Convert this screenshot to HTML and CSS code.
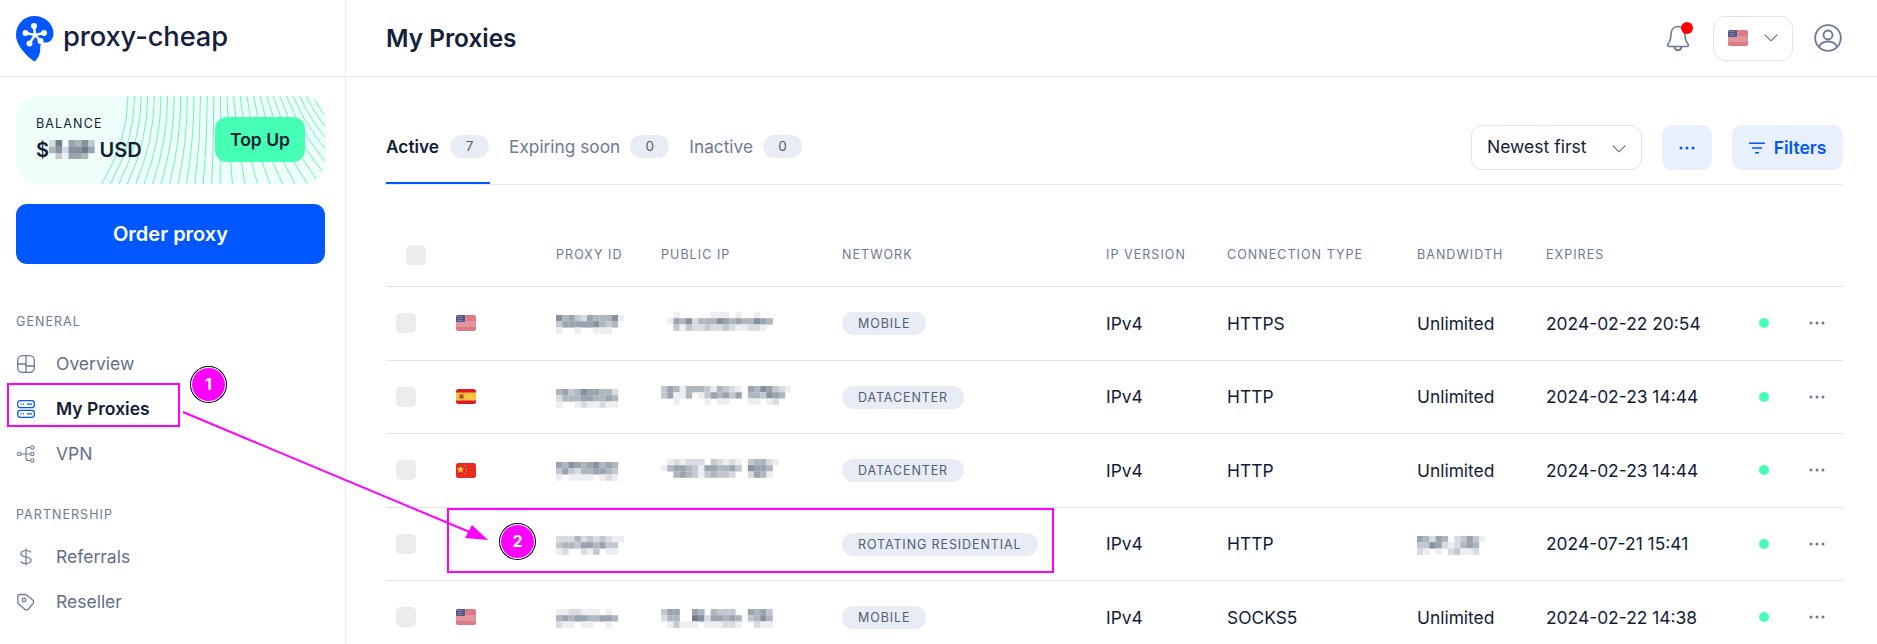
FILE: index.html
```html
<!DOCTYPE html>
<html lang="en">
<head>
<meta charset="utf-8">
<title>My Proxies</title>
<link rel="stylesheet" href="styles.css">
</head>
<body>
<svg class="defs" width="0" height="0" aria-hidden="true">
  <defs>
    <symbol id="flag-us" viewBox="0 0 20 16">
      <rect width="20" height="16" rx="1.5" fill="#e2959f"/>
      <path d="M0 1h20M0 13h20M0 15h20M10 3h10M10 5h10" stroke="#d8606f" stroke-width="1"/>
      <rect width="9" height="7" rx="1" fill="#4f5485"/>
      <path d="M1.500 1.500h6M1.500 3.500h6M1.500 5.500h6" stroke="#a9acc8" stroke-width="1" stroke-dasharray="1 1"/>
    </symbol>
    <symbol id="flag-es" viewBox="0 0 20 15">
      <rect width="20" height="15" rx="1.500" fill="#dd1a2a"/>
      <rect y="3.500" width="20" height="8" fill="#f7c23d"/>
      <rect x="3.500" y="5.500" width="4" height="4" fill="#b5442b"/>
    </symbol>
    <symbol id="flag-cn" viewBox="0 0 20 15">
      <rect width="20" height="15" rx="1.500" fill="#ea2a1f"/>
      <path d="M4.500 2.500l1 2.800 2.800.1-2.200 1.700.8 2.700-2.400-1.600-2.400 1.600.8-2.700L.7 5.400l2.800-.1z" fill="#f9d84a"/>
      <path d="M9 2.500v1M10.500 5v1M10.500 7.500v1M9 10v1" stroke="#f9d84a" stroke-width="1"/>
    </symbol>
    <symbol id="chev" viewBox="0 0 14 8">
      <path d="M.7.7 7 6.800 13.300.7" fill="none" stroke="#5d6470" stroke-width="1.100"/>
    </symbol>
    <symbol id="dots" viewBox="0 0 16 4">
      <circle cx="2" cy="2" r="1.500"/><circle cx="8" cy="2" r="1.500"/><circle cx="14" cy="2" r="1.500"/>
    </symbol>
  </defs>
</svg>

<div class="app">
  <aside class="sidebar">
    <div class="brand">
      <svg class="logo" viewBox="0 0 38 46" aria-hidden="true">
        <path fill="#0057ff" d="M18.500 0C29 0 37.500 8 37.500 17.500 37.500 23.500 33.500 27 28.500 26.500 25.500 26.200 24.300 28 24.300 31 24.300 36 23.500 41.500 18.500 45.500 15 43.300 0 31.500 0 19 0 8 8 0 18.500 0Z"/>
        <g stroke="#fff" stroke-width="2.400" fill="#fff">
          <path d="M19 19 18 10M19 19 28 17M19 19 9.500 17M19 19 13.500 27.500M19 19 24.500 25" fill="none"/>
          <circle cx="18" cy="10" r="1.800"/><circle cx="28" cy="17" r="1.800"/><circle cx="9.500" cy="17" r="1.800"/><circle cx="13.500" cy="27.500" r="1.800"/><circle cx="24.500" cy="25" r="1.800"/>
        </g>
      </svg>
      <span class="brand-name">proxy-cheap</span>
    </div>
    <div class="side-body">
      <div class="balance">
        <svg class="balance-lines" id="balance-lines" width="309" height="88" aria-hidden="true"></svg>
        <div class="balance-info">
          <div class="balance-label">BALANCE</div>
          <div class="balance-amount">$<span class="mosaic" data-cell="6.500" data-rows="2705463|4626675|0315540"></span> USD</div>
        </div>
        <button class="topup">Top Up</button>
      </div>
      <button class="order">Order proxy</button>

      <div class="nav-title first">GENERAL</div>
      <a class="nav-item">
        <svg class="nav-icon" viewBox="0 0 18 18" fill="none" stroke="#6c7a93" stroke-width="1.300"><rect x=".7" y=".7" width="16.600" height="16.600" rx="4.500"/><path d="M9 .7V17.300M.7 9h8.300M9 11h8.300"/></svg>
        <span>Overview</span>
      </a>
      <a class="nav-item active">
        <svg class="nav-icon" viewBox="0 0 18 18" fill="none" stroke="#0057ff" stroke-width="1.300"><rect x=".7" y=".7" width="16.600" height="7" rx="2.500"/><rect x=".7" y="10.300" width="16.600" height="7" rx="2.500"/><path d="M3.500 4.200h1.200M6 4.200h1M10 4.200h5M3.500 13.800h1.200M6 13.800h1M10 13.800h5"/></svg>
        <span>My Proxies</span>
      </a>
      <a class="nav-item">
        <svg class="nav-icon" viewBox="0 0 18 18" fill="none" stroke="#6c7a93" stroke-width="1.100"><circle cx="2.200" cy="9" r="1.700"/><circle cx="15.300" cy="2.500" r="1.700"/><circle cx="15.300" cy="9" r="1.700"/><circle cx="15.300" cy="15.500" r="1.700"/><path d="M4 9h9.500M13.500 2.500H11a2 2 0 0 0-2 2v9a2 2 0 0 0 2 2h2.500"/></svg>
        <span>VPN</span>
      </a>

      <div class="nav-title">PARTNERSHIP</div>
      <a class="nav-item">
        <svg class="nav-icon" viewBox="0 0 18 18" fill="none" stroke="#6c7a93" stroke-width="1.200"><path d="M9 .5v17M14 4.500C13.500 3 11.500 2.500 9 2.500c-3 0-5 1.300-5 3.200C4 8 6.300 8.500 9 9c2.800.5 5 1.200 5 3.300 0 2-2 3.200-5 3.200-2.700 0-4.500-.7-5-2.300"/></svg>
        <span>Referrals</span>
      </a>
      <a class="nav-item">
        <svg class="nav-icon" viewBox="0 0 18 18" fill="none" stroke="#6c7a93" stroke-width="1.300"><path d="M2.500 1.500h6.200l6.800 5.300c1.300 1 1.500 2.600.5 3.800l-4.600 5.400c-1 1.100-2.600 1.200-3.700.2L1.500 11C1 10.500.8 10 .8 9.300V3.200c0-1 .7-1.700 1.700-1.700Z"/><circle cx="7" cy="7" r="1.800"/></svg>
        <span>Reseller</span>
      </a>
    </div>
  </aside>

  <div class="main">
    <header class="topbar">
      <h1 class="page-title">My Proxies</h1>
      <div class="top-actions">
        <div class="bell">
          <svg class="bell-icon" viewBox="0 0 24 28" fill="none" stroke="#6c7a93" stroke-width="1.600"><path d="M12 2.500C7 2.500 5 6.500 5 10.500c0 5-1 7-3 9.500-.8 1-.3 2.500 1 2.500h18c1.300 0 1.800-1.500 1-2.500-2-2.500-3-4.500-3-9.500 0-4-2-8-7-8Z"/><path d="M8.500 23c.5 2 1.800 3.300 3.500 3.300s3-1.300 3.500-3.300" stroke-width="2"/></svg>
          <span class="bell-dot"></span>
        </div>
        <button class="lang">
          <svg class="flag"><use href="#flag-us"/></svg>
          <svg class="chev"><use href="#chev"/></svg>
        </button>
        <svg class="user-icon" viewBox="0 0 28 28" fill="none" stroke="#6c7a93" stroke-width="1.800"><circle cx="14" cy="14" r="12.800"/><circle cx="14" cy="11" r="4.500"/><path d="M5 23c1.500-4 5-5.500 9-5.500s7.500 1.500 9 5.500"/></svg>
      </div>
    </header>

    <div class="content">
      <div class="toolbar">
        <div class="tabs">
          <div class="tab active"><span>Active</span><span class="count">7</span></div>
          <div class="tab"><span>Expiring soon</span><span class="count">0</span></div>
          <div class="tab"><span>Inactive</span><span class="count">0</span></div>
        </div>
        <div class="tools">
          <button class="select"><span>Newest first</span><svg class="chev"><use href="#chev"/></svg></button>
          <button class="soft-btn more"><svg class="dots-icon"><use href="#dots"/></svg></button>
          <button class="soft-btn filters">
            <svg class="filter-icon" viewBox="0 0 16 12" fill="none" stroke="#0057ff" stroke-width="1.400"><path d="M0 1.200h16M3 6h10M6 10.800h4"/></svg>
            <span>Filters</span>
          </button>
        </div>
      </div>

      <div class="table">
        <div class="row head">
          <div class="check-cell"><span class="check head-check"></span></div>
          <div></div>
          <div>PROXY ID</div>
          <div>PUBLIC IP</div>
          <div>NETWORK</div>
          <div>IP VERSION</div>
          <div>CONNECTION TYPE</div>
          <div>BANDWIDTH</div>
          <div>EXPIRES</div>
          <div></div>
          <div></div>
        </div>

        <div class="row">
          <div class="check-cell"><span class="check"></span></div>
          <div><svg class="flag"><use href="#flag-us"/></svg></div>
          <div><span class="mosaic" data-rows="64532544461|35555564340|10010011100"></span></div>
          <div><span class="mosaic up" data-rows="001000001110100100|015462444654544654|003132232232112210"></span></div>
          <div><span class="pill">MOBILE</span></div>
          <div>IPv4</div>
          <div>HTTPS</div>
          <div>Unlimited</div>
          <div>2024-02-22 20:54</div>
          <div><span class="status"></span></div>
          <div><svg class="row-dots"><use href="#dots"/></svg></div>
        </div>

        <div class="row">
          <div class="check-cell"><span class="check"></span></div>
          <div><svg class="flag flag-sm"><use href="#flag-es"/></svg></div>
          <div><span class="mosaic" data-rows="45346554420|24445544540|10012112110"></span></div>
          <div><span class="mosaic up" data-rows="354144431432105465321|351140135453504436540|001000010110001101200"></span></div>
          <div><span class="pill">DATACENTER</span></div>
          <div>IPv4</div>
          <div>HTTP</div>
          <div>Unlimited</div>
          <div>2024-02-23 14:44</div>
          <div><span class="status"></span></div>
          <div><svg class="row-dots"><use href="#dots"/></svg></div>
        </div>

        <div class="row">
          <div class="check-cell"><span class="check"></span></div>
          <div><svg class="flag flag-sm"><use href="#flag-cn"/></svg></div>
          <div><span class="mosaic" data-rows="54654564540|35324455430|10111101210"></span></div>
          <div><span class="mosaic up" data-rows="0121222032121034421|1455431554453065540|0045431343320025410"></span></div>
          <div><span class="pill">DATACENTER</span></div>
          <div>IPv4</div>
          <div>HTTP</div>
          <div>Unlimited</div>
          <div>2024-02-23 14:44</div>
          <div><span class="status"></span></div>
          <div><svg class="row-dots"><use href="#dots"/></svg></div>
        </div>

        <div class="row">
          <div class="check-cell"><span class="check"></span></div>
          <div></div>
          <div><span class="mosaic" data-rows="22242323211|34435545330|12002130110"></span></div>
          <div></div>
          <div><span class="pill">ROTATING RESIDENTIAL</span></div>
          <div>IPv4</div>
          <div>HTTP</div>
          <div><span class="mosaic" data-rows="54254023531|33652124540|21010231120"></span></div>
          <div>2024-07-21 15:41</div>
          <div><span class="status"></span></div>
          <div><svg class="row-dots"><use href="#dots"/></svg></div>
        </div>

        <div class="row">
          <div class="check-cell"><span class="check"></span></div>
          <div><svg class="flag"><use href="#flag-us"/></svg></div>
          <div><span class="mosaic" data-rows="11221110100|45455445540|21101100100"></span></div>
          <div><span class="mosaic" data-rows="3550054043330054530|2440076255454034640|0131110111221002110"></span></div>
          <div><span class="pill">MOBILE</span></div>
          <div>IPv4</div>
          <div>SOCKS5</div>
          <div>Unlimited</div>
          <div>2024-02-22 14:38</div>
          <div><span class="status"></span></div>
          <div><svg class="row-dots"><use href="#dots"/></svg></div>
        </div>
      </div>
    </div>
  </div>
</div>

<div class="mark-box mark-nav"></div>
<div class="mark-box mark-row"></div>
<span class="step step-one">1</span>
<span class="step step-two">2</span>
<svg class="mark-arrow" width="1877" height="644" aria-hidden="true">
  <path d="M183 412 472 533" stroke="#ff00ff" stroke-width="2" fill="none"/>
  <path d="M488 540 465 538 472 525Z" fill="#ff00ff"/>
</svg>
<script src="mosaic.js"></script>
</body>
</html>
```
FILE: styles.css
```css
* { box-sizing: border-box; }
html, body { margin: 0; height: 644px; overflow: hidden; }
body {
  position: relative;
  background: #fff;
  color: #111c36;
  font-family: Inter, "Liberation Sans", sans-serif;
  font-size: 17.400px;
}
button { font: inherit; border: 0; cursor: pointer; }
.defs { position: absolute; }

.app { display: flex; height: 644px; }

/* sidebar */
.sidebar { width: 346px; flex: none; border-right: 1px solid #e9ebef; }
.brand {
  height: 77px;
  display: flex;
  align-items: center;
  gap: 9px;
  padding: 0 0 0 16px;
  border-bottom: 1px solid #e9ebef;
}
.logo { width: 38px; height: 46px; margin-top: 1px; }
.brand-name {
  font-family: Inter, sans-serif;
  font-size: 27.300px;
  font-weight: 500;
  letter-spacing: -.1px;
  color: #14203c;
  margin-top: -3px;
}
.side-body { padding: 19px 20px 0 16px; }

.balance {
  position: relative;
  height: 88px;
  border-radius: 22px;
  background: #effff9;
  overflow: hidden;
  display: flex;
  align-items: center;
  justify-content: space-between;
  padding: 0 20px;
}
.balance-lines { position: absolute; left: 0; top: 0; }
.balance-info { position: relative; }
.balance-label { font-size: 12.500px; letter-spacing: 1.150px; line-height: 18px; margin-top: -3px; }
.balance-amount {
  font-size: 20px;
  font-weight: 600;
  line-height: 26px;
  margin-top: 4px;
  display: flex;
  align-items: center;
  white-space: pre;
}
.topup {
  position: relative;
  width: 90px;
  height: 45px;
  border-radius: 12px;
  background: #44ffb4;
  color: #0f1b33;
  font-size: 17.500px;
  font-weight: 600;
  padding: 0;
  margin-top: -1px;
}
.order {
  display: block;
  width: 100%;
  height: 60px;
  margin-top: 20px;
  border-radius: 11px;
  background: #0057ff;
  color: #fff;
  font-size: 20px;
  font-weight: 600;
}
.nav-title {
  color: #6c7a8c;
  font-size: 12.500px;
  letter-spacing: 1.050px;
  line-height: 16px;
  margin-top: 31px;
  margin-bottom: 11px;
}
.nav-title.first { margin-top: 50px; }
.nav-item {
  height: 45px;
  display: flex;
  align-items: center;
  gap: 21px;
  color: #5f6f88;
  font-size: 17.500px;
  padding-left: 1px;
}
.nav-item.active { color: #111c36; font-weight: 600; }
.nav-icon { width: 18px; height: 18px; flex: none; }

/* top bar */
.main { flex: 1; min-width: 0; }
.topbar {
  height: 77px;
  display: flex;
  align-items: center;
  justify-content: space-between;
  padding: 0 35px 0 40px;
  border-bottom: 1px solid #e9ebef;
}
.page-title { margin: 0; font-size: 24.400px; font-weight: 600; color: #14203c; }
.top-actions { display: flex; align-items: center; }
.bell { position: relative; width: 24px; height: 28px; margin-right: 23px; }
.bell-icon { display: block; width: 24px; height: 28px; }
.bell-dot {
  position: absolute;
  right: -3px;
  top: -2px;
  width: 12px;
  height: 12px;
  border-radius: 50%;
  background: #ff0000;
}
.lang {
  width: 80px;
  height: 45px;
  border: 1px solid #e2e4e8;
  border-radius: 12px;
  background: #fff;
  display: flex;
  align-items: center;
  gap: 16px;
  padding: 0 0 0 14px;
  margin-right: 21px;
}
.flag { display: block; width: 20px; height: 16px; border-radius: 2px; }
.flag-sm { height: 15px; }
.chev { display: block; width: 14px; height: 8px; flex: none; }
.user-icon { width: 28px; height: 28px; }

/* toolbar */
.content { padding: 0 34px 0 40px; }
.toolbar {
  height: 108px;
  display: flex;
  justify-content: space-between;
  align-items: flex-end;
  border-bottom: 1px solid #e7eaf2;
}
.tabs { display: flex; gap: 20px; align-self: flex-end; }
.tab {
  height: 60px;
  display: flex;
  align-items: flex-start;
  gap: 10px;
  padding-top: 11px;
  line-height: 23px;
  color: #6c7a93;
  font-size: 17.300px;
}
.tab.active {
  color: #111c36;
  font-weight: 600;
  border-bottom: 2px solid #0057ff;
  height: 60px;
  width: 104px;
  gap: 11px;
  margin-right: -1px;
}
.count {
  width: 39px;
  height: 23px;
  border-radius: 12px;
  background: #e8edf5;
  color: #4f5d75;
  font-size: 13.500px;
  font-weight: 400;
  text-align: center;
  line-height: 22px;
}
.tools { display: flex; gap: 20px; margin-bottom: 14px; }
.select {
  width: 171px;
  height: 45px;
  background: #fff;
  border: 1px solid #e0e2e6;
  border-radius: 11px;
  display: flex;
  align-items: center;
  justify-content: space-between;
  padding: 0 15px 2px 15px;
  color: #111c36;
  font-size: 17.500px;
}
.select .chev { margin-top: 5px; }
.soft-btn {
  height: 45px;
  background: #e8f0fe;
  border-radius: 10px;
  display: flex;
  align-items: center;
  justify-content: center;
  color: #0057ff;
  font-size: 17.500px;
  font-weight: 600;
  padding: 0;
}
.more { width: 50px; }
.dots-icon { width: 16px; height: 4px; fill: #0057ff; }
.filters { width: 111px; gap: 9px; padding-bottom: 1px; }
.filter-icon { width: 16px; height: 12px; margin-top: 2px; }

/* table */
.row {
  display: grid;
  grid-template-columns: 70px 100px 105px 181px 264px 121px 190px 129px 213px 50px 34px;
  align-items: center;
  height: 73.500px;
  border-bottom: 1px solid #e4e5e8;
  font-size: 17.400px;
  color: #111c36;
}
.row.head {
  height: 102px;
  padding-top: 37px;
  border-bottom: 1px solid #e2e3e9;
  color: #6c7a93;
  font-size: 12.500px;
  letter-spacing: 1.050px;
}
.check-cell { padding-left: 10px; }
.check { display: block; width: 20px; height: 20px; border-radius: 5px; background: #ebecee; }
.head-check { margin-left: 10px; margin-top: 1px; }
.mosaic { display: inline-flex; flex: none; vertical-align: middle; }
.mosaic svg { display: block; }
.mosaic.up { transform: translateY(-3px); }
.pill {
  display: inline-block;
  height: 23px;
  padding: 0 16px;
  border-radius: 12px;
  background: #e8edf5;
  color: #4f5d75;
  font-size: 12.500px;
  letter-spacing: .9px;
  line-height: 23px;
}
.status { display: block; width: 10px; height: 10px; border-radius: 50%; background: #44ffb4; }
.row-dots { display: block; width: 16px; height: 4px; fill: #6c7a93; }

/* annotations */
.mark-box { position: absolute; border: 2px solid #ff00ff; }
.mark-nav { left: 7px; top: 383px; width: 173px; height: 44px; }
.mark-row { left: 447px; top: 508px; width: 607px; height: 65px; }
.step {
  position: absolute;
  width: 37px;
  height: 37px;
  border-radius: 50%;
  background: #ff00ff;
  color: #fff;
  font-size: 16px;
  font-weight: 700;
  text-align: center;
  line-height: 37px;
  box-shadow: inset 0 0 0 1px #000, inset 0 0 0 2px #fff;
}
.step-one { left: 190px; top: 366px; }
.step-two { left: 499px; top: 523px; }
.mark-arrow { position: absolute; left: 0; top: 0; pointer-events: none; }
```
FILE: mosaic.js
```js
(function () {
  var NS = "http://www.w3.org/2000/svg";
  var SHADES = ["#ffffff", "#eceef1", "#d8dce1", "#c2c8cf", "#aeb6be", "#9aa4ae", "#85919d", "#6f7c8a"];

  document.querySelectorAll(".mosaic").forEach(function (el) {
    var rows = el.dataset.rows.split("|");
    var cell = parseFloat(el.dataset.cell || "6.200");
    var svg = document.createElementNS(NS, "svg");
    svg.setAttribute("width", rows[0].length * cell);
    svg.setAttribute("height", rows.length * cell);
    rows.forEach(function (row, y) {
      row.split("").forEach(function (v, x) {
        if (v === "0") return;
        var r = document.createElementNS(NS, "rect");
        r.setAttribute("x", x * cell);
        r.setAttribute("y", y * cell);
        r.setAttribute("width", cell + 0.2);
        r.setAttribute("height", cell + 0.2);
        r.setAttribute("fill", SHADES[+v]);
        svg.appendChild(r);
      });
    });
    el.appendChild(svg);
  });

  var lines = document.getElementById("balance-lines");
  for (var start = 112; start <= 330; start += 6.6) {
    var d = start - 205;
    var end = 205 + d * (d < 0 ? 1.28 : 1.9);
    var ctrl = d < 0 ? start : start + d * 0.25;
    var p = document.createElementNS(NS, "path");
    p.setAttribute("d", "M" + start + " 0Q" + ctrl + " 44 " + end + " 88");
    p.setAttribute("fill", "none");
    p.setAttribute("stroke", "#58f5b9");
    p.setAttribute("stroke-width", "0.9");
    lines.appendChild(p);
  }
})();
```
